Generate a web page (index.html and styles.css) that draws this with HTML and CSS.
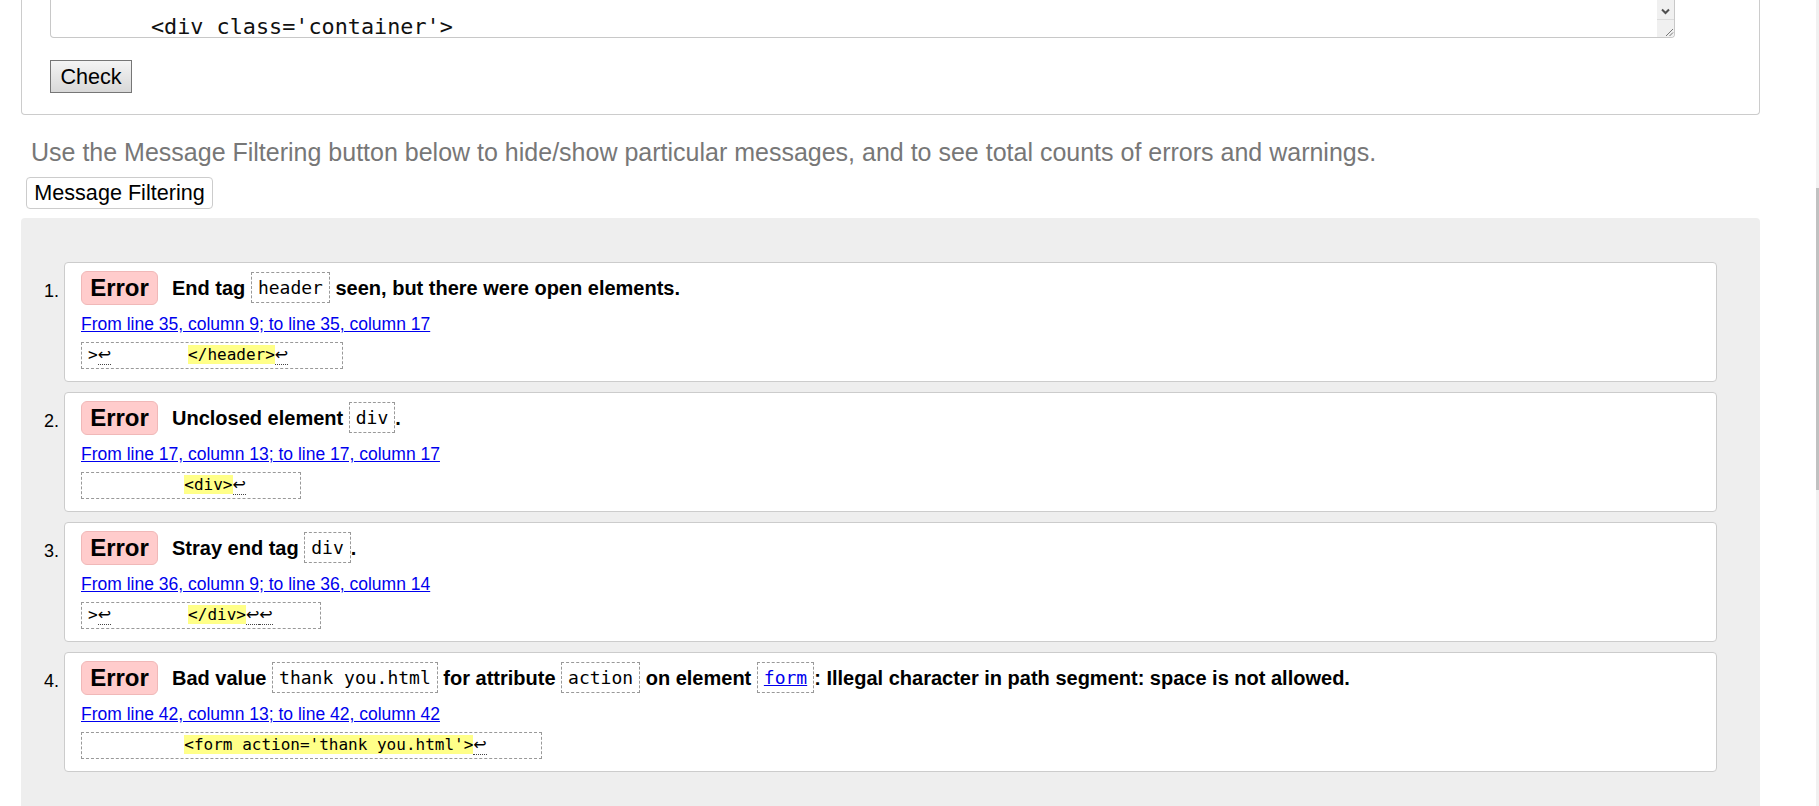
FILE: index.html
```html
<!DOCTYPE html>
<html lang="en">
<head>
<meta charset="utf-8">
<title>Nu Html Checker</title>
<link rel="stylesheet" href="styles.css">
</head>
<body>
<div class="page">
  <div class="form-panel">
    <div class="textarea">
      <div class="ta-text">&lt;div class='container'&gt;</div>
      <div class="ta-scroll">
        <div class="ta-arrow"><svg width="17" height="19" viewBox="0 0 17 19"><path d="M5 9.5 L8.5 13 L12 9.5" fill="none" stroke="#505050" stroke-width="2"/></svg></div>
        <div class="ta-grip"><svg width="17" height="17" viewBox="0 0 17 17"><path d="M9 16 L16 9 M12.5 16 L16 12.5" fill="none" stroke="#777" stroke-width="1"/></svg></div>
      </div>
    </div>
    <button class="check">Check</button>
  </div>

  <p class="hint">Use the Message Filtering button below to hide/show particular messages, and to see total counts of errors and warnings.</p>
  <button class="filter">Message Filtering</button>

  <div class="results">
    <ol class="messages">
      <li class="item">
        <span class="num">1.</span>
        <div class="card">
          <div class="msg-line"><span class="badge">Error</span><span class="msg">End tag <code class="tag">header</code> seen, but there were open elements.</span></div>
          <div class="loc-line"><a class="loc" href="#l35">From line 35, column 9; to line 35, column 17</a></div>
          <div class="ext-line"><code class="extract">&gt;<span class="lf">↩</span>        <b class="hl">&lt;/header&gt;</b><span class="lf">↩</span></code></div>
        </div>
      </li>
      <li class="item">
        <span class="num">2.</span>
        <div class="card">
          <div class="msg-line"><span class="badge">Error</span><span class="msg">Unclosed element <code class="tag">div</code>.</span></div>
          <div class="loc-line"><a class="loc" href="#l17">From line 17, column 13; to line 17, column 17</a></div>
          <div class="ext-line"><code class="extract">          <b class="hl">&lt;div&gt;</b><span class="lf">↩</span></code></div>
        </div>
      </li>
      <li class="item">
        <span class="num">3.</span>
        <div class="card">
          <div class="msg-line"><span class="badge">Error</span><span class="msg">Stray end tag <code class="tag">div</code>.</span></div>
          <div class="loc-line"><a class="loc" href="#l36">From line 36, column 9; to line 36, column 14</a></div>
          <div class="ext-line"><code class="extract extract-short">&gt;<span class="lf">↩</span>        <b class="hl">&lt;/div&gt;</b><span class="lf">↩</span><span class="lf">↩</span></code></div>
        </div>
      </li>
      <li class="item">
        <span class="num">4.</span>
        <div class="card">
          <div class="msg-line"><span class="badge">Error</span><span class="msg">Bad value <code class="tag">thank you.html</code> for attribute <code class="tag">action</code> on element <code class="tag"><a class="taglink" href="#form">form</a></code>: Illegal character in path segment: space is not allowed.</span></div>
          <div class="loc-line"><a class="loc" href="#l42">From line 42, column 13; to line 42, column 42</a></div>
          <div class="ext-line"><code class="extract">          <b class="hl">&lt;form action='thank you.html'&gt;</b><span class="lf">↩</span></code></div>
        </div>
      </li>
    </ol>
  </div>
</div>
<div class="scrollbar"><div class="thumb"></div></div>
</body>
</html>
```

FILE: styles.css
```css
html {
  overflow: hidden;
}
body {
  margin: 0;
  background: #fff;
  font-family: Arial, "Liberation Sans", sans-serif;
  color: #000;
}
.page {
  margin-left: 21px;
  width: 1739px;
}
.form-panel {
  border: 1px solid #ccc;
  border-top: none;
  border-radius: 0 0 4px 4px;
  padding: 0 84px 21px 28px;
}
.textarea {
  display: flex;
  height: 37px;
  border: 1px solid #c8c8c8;
  border-top: none;
  border-radius: 0 0 4px 4px;
  background: #fff;
}
.ta-text {
  flex: 1;
  padding: 16px 0 0 100px;
  font-family: "DejaVu Sans Mono", "Liberation Mono", monospace;
  font-size: 21.8px;
  line-height: 21px;
  color: #111;
  white-space: pre;
}
.ta-scroll {
  width: 17px;
  display: flex;
  flex-direction: column;
  background: #f0f0f0;
  border-radius: 0 0 4px 0;
}
.ta-arrow {
  height: 19px;
  border-bottom: 1px solid #dcdcdc;
}
.ta-arrow svg, .ta-grip svg {
  display: block;
}
.ta-grip {
  flex: 1;
}
.check {
  display: block;
  margin-top: 22px;
  width: 82px;
  height: 33px;
  padding: 0;
  border: 1px solid #767676;
  border-radius: 0;
  background: linear-gradient(#f4f4f4, #d8d8d8);
  font-family: Arial, "Liberation Sans", sans-serif;
  font-size: 21.6px;
  color: #000;
}
.hint {
  margin: 23px 0 0 10px;
  font-size: 25px;
  line-height: 29px;
  color: #777;
}
.filter {
  display: block;
  margin: 10px 0 0 5px;
  width: 187px;
  height: 32px;
  padding: 0;
  border: 1px solid #ccc;
  border-radius: 4px;
  background: #fff;
  font-family: Arial, "Liberation Sans", sans-serif;
  font-size: 21.6px;
  color: #000;
}
.results {
  margin-top: 9px;
  background: #eee;
  border-radius: 4px 4px 0 0;
  padding: 44px 43px 80px 0;
}
.messages {
  list-style: none;
  margin: 0;
  padding: 0;
  display: flex;
  flex-direction: column;
  gap: 10px;
}
.item {
  display: flex;
}
.num {
  width: 38px;
  padding-right: 5px;
  padding-top: 18px;
  text-align: right;
  font-size: 18px;
  line-height: 22px;
}
.card {
  flex: 1;
  height: 118px;
  background: #fff;
  border: 1px solid #ccc;
  border-radius: 4px;
  padding: 0 16px;
}
.msg-line {
  margin-top: 8px;
  height: 34px;
  display: flex;
  align-items: center;
}
.badge {
  box-sizing: border-box;
  height: 34px;
  width: 77px;
  border: 1px solid #f0b8b8;
  border-radius: 6px;
  background: #fcc;
  font-size: 24px;
  font-weight: bold;
  line-height: 32px;
  text-align: center;
}
.msg {
  margin-left: 14px;
  font-size: 20px;
  font-weight: bold;
  line-height: 31px;
  white-space: nowrap;
}
.tag {
  display: inline-block;
  vertical-align: middle;
  margin-top: -3px;
  padding: 0 6px;
  border: 1px dashed #999;
  font-family: "DejaVu Sans Mono", "Liberation Mono", monospace;
  font-size: 18px;
  font-weight: normal;
  line-height: 29px;
}
.taglink {
  color: #00e;
  text-decoration: underline;
}
.loc-line {
  margin-top: 8px;
  height: 22px;
}
.loc {
  font-size: 17.5px;
  line-height: 22px;
  color: #00e;
  text-decoration: underline;
}
.ext-line {
  margin-top: 7px;
  height: 27px;
}
.extract {
  display: inline-block;
  box-sizing: border-box;
  height: 27px;
  padding: 0 54px 0 6px;
  border: 1px dashed #999;
  font-family: "DejaVu Sans Mono", "Liberation Mono", monospace;
  font-size: 16px;
  line-height: 24px;
  white-space: pre;
}
.extract-short {
  padding-right: 47px;
}
.hl {
  font-weight: normal;
  background: #ff8;
}
.lf {
  font-family: "DejaVu Sans", sans-serif;
  border-bottom: 1px dotted #444;
}
.scrollbar {
  position: fixed;
  top: 0;
  right: 0;
  width: 3px;
  height: 100%;
  background: #f1f1f1;
}
.thumb {
  position: absolute;
  top: 188px;
  left: 0;
  width: 3px;
  height: 302px;
  background: #c1c1c1;
}
```
